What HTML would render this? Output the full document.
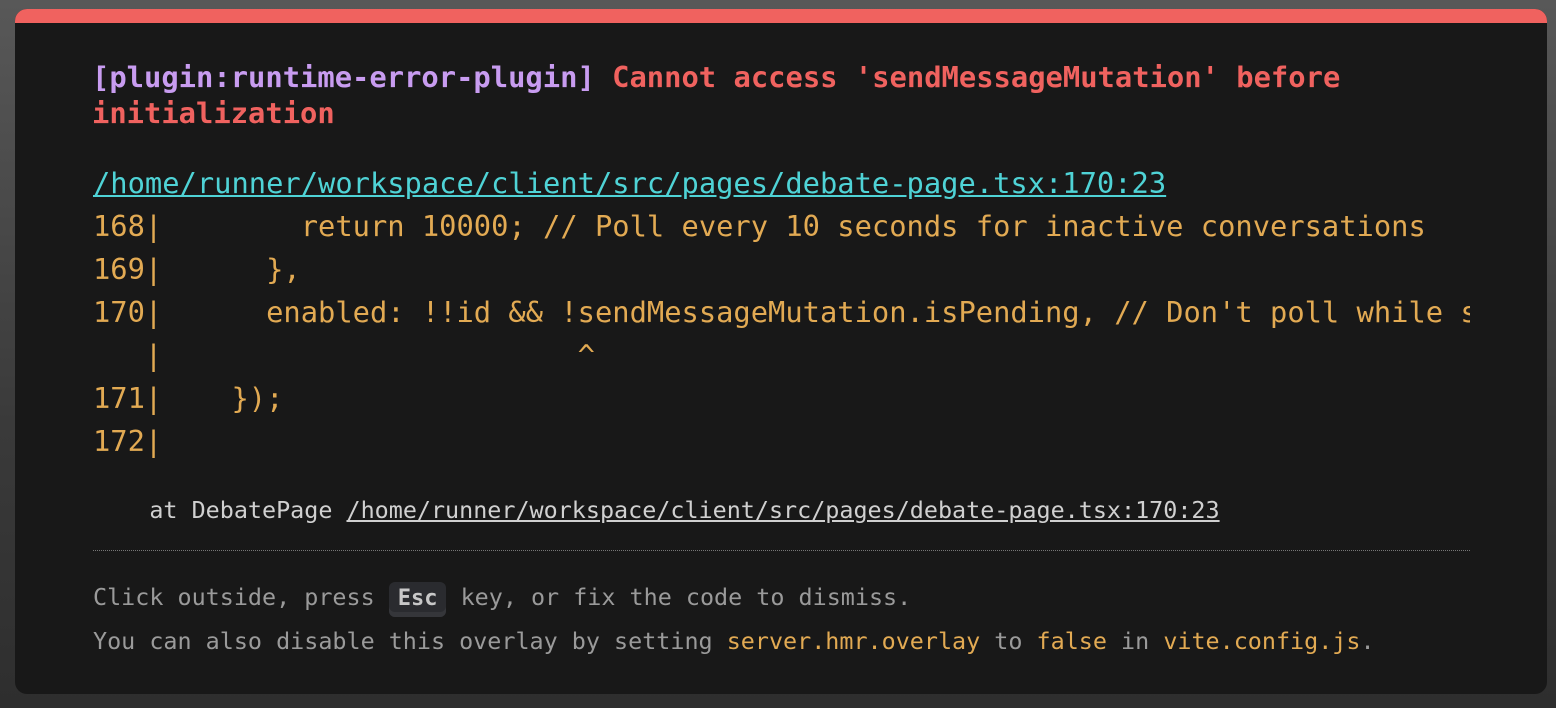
<!DOCTYPE html>
<html><head><meta charset="utf-8"><style>
html,body{margin:0;padding:0;width:1556px;height:708px;overflow:hidden;background:linear-gradient(#585858,#3a3a3a 60%,#2e2e2e);}
.win{position:absolute;left:15px;top:9px;width:1532px;height:685px;background:#181818;border-radius:12px;overflow:hidden;}
.bar{position:absolute;left:0;top:0;right:0;height:14px;background:#f0625f;}
.t{position:absolute;left:78px;font-family:"DejaVu Sans Mono","Liberation Mono",monospace;white-space:pre;}
.big{font-size:28.76px;line-height:43px;}
.sm{font-size:23.4px;line-height:42px;}
.title{font-weight:bold;font-size:28.8px;line-height:36px;color:#f0625f;top:50px;left:77px;}
.p{color:#c89cf0}
.link{color:#4fd3d6;text-decoration:underline;top:153px;}
.code{color:#e2aa53;top:196px;width:1377px;overflow:hidden;}
.at{color:#d0d0d0;top:480px;}
.at u{text-decoration:underline}
.hr{position:absolute;left:78px;width:1377px;top:541px;border-top:1px dotted #777;}
.tip{color:#9a9a9a;top:567px;}
.y{color:#e2aa53}
kbd{font-family:inherit;font-weight:bold;color:#c8c8c8;background:#2a2b2f;border-radius:6px;padding:4px 9px 6px;box-shadow:inset 0 -5px 0 #35363a;font-size:22px;}
</style></head><body>
<div class="win"><div class="bar"></div>
<div class="t title"><span class="p">[plugin:runtime-error-plugin]</span> Cannot access 'sendMessageMutation' before
initialization</div>
<div class="t big link">/home/runner/workspace/client/src/pages/debate-page.tsx:170:23</div>
<div class="t big code">168|        return 10000; // Poll every 10 seconds for inactive conversations
169|      },
170|      enabled: !!id &amp;&amp; !sendMessageMutation.isPending, // Don't poll while sending
   |                        ^
171|    });
172|</div>
<div class="t sm at">    at DebatePage <u>/home/runner/workspace/client/src/pages/debate-page.tsx:170:23</u></div>
<div class="hr"></div>
<div class="t sm tip">Click outside, press <kbd>Esc</kbd> key, or fix the code to dismiss.
You can also disable this overlay by setting <span class="y">server.hmr.overlay</span> to <span class="y">false</span> in <span class="y">vite.config.js</span>.</div>
</div>
</body></html>
